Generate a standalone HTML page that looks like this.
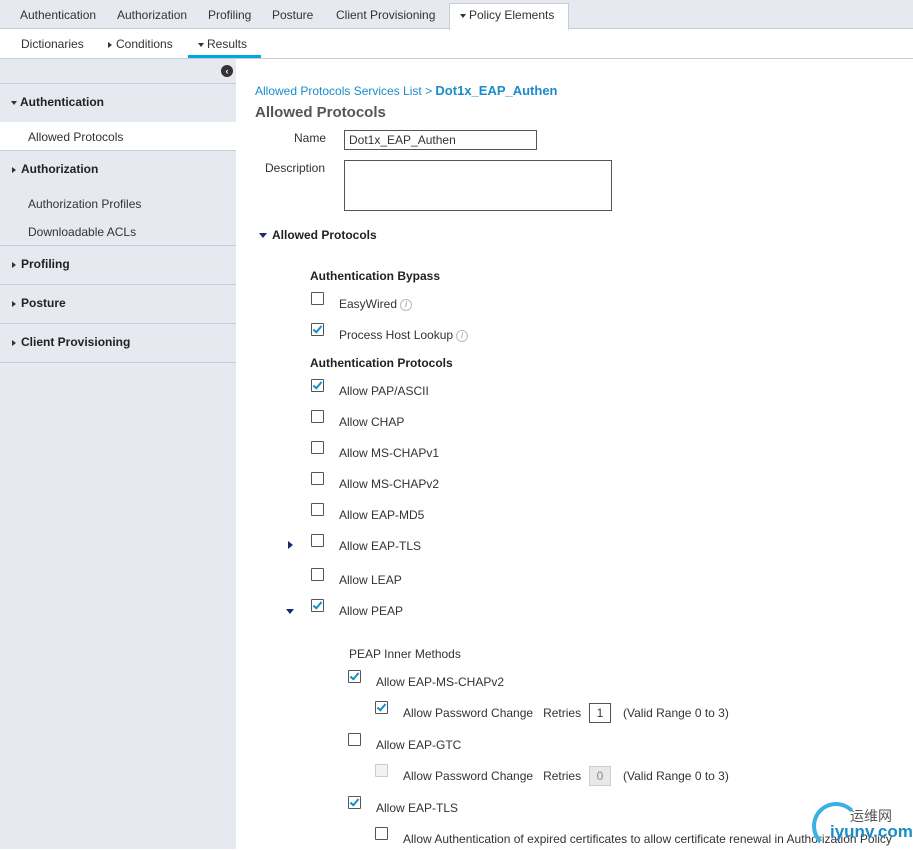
<!DOCTYPE html><html><head><style>
body{margin:0;width:913px;height:849px;overflow:hidden;font-family:"Liberation Sans",sans-serif;font-size:12px;color:#333;background:#fff;position:relative}
.a{position:absolute;white-space:nowrap}
.cb{position:absolute;width:11px;height:11px;border:1px solid #555;background:#fff;border-radius:1px}
.cb.c::after{content:"";position:absolute;left:3px;top:0px;width:3px;height:7px;border:solid #1a8cc8;border-width:0 2px 2px 0;transform:rotate(40deg)}
.b{font-weight:bold;color:#222}
.sl{position:absolute;left:0;width:236px;height:1px;background:#c8ccd4}
.tri{display:inline-block;width:0;height:0;border-left:3px solid transparent;border-right:3px solid transparent;border-top:4px solid #333;vertical-align:middle;margin-right:3px}
.trr{display:inline-block;width:0;height:0;border-top:3px solid transparent;border-bottom:3px solid transparent;border-left:4px solid #333;vertical-align:middle;margin-right:5px}
.i{display:inline-block;width:10px;height:10px;border:1px solid #bbb;border-radius:50%;font-size:8px;text-align:center;line-height:10px;color:#888;font-style:italic;margin-left:3px;vertical-align:middle}
</style></head><body>
<div class="a" style="left:0;top:0;width:913px;height:28px;background:#e6e9f0;border-bottom:1px solid #c8ccd4"></div>
<div class="a" style="left:449px;top:3px;width:118px;height:26px;background:#fff;border:1px solid #c8ccd4;border-bottom:none"></div>
<div class="a" style="left:20px;top:8px">Authentication</div>
<div class="a" style="left:117px;top:8px">Authorization</div>
<div class="a" style="left:208px;top:8px">Profiling</div>
<div class="a" style="left:272px;top:8px">Posture</div>
<div class="a" style="left:336px;top:8px">Client Provisioning</div>
<div class="a" style="left:460px;top:8px"><span class="tri"></span>Policy Elements</div>
<div class="a" style="left:21px;top:37px">Dictionaries</div>
<div class="a" style="left:108px;top:37px"><span class="trr" style="margin-right:4px"></span>Conditions</div>
<div class="a" style="left:198px;top:37px"><span class="tri"></span>Results</div>
<div class="a" style="left:188px;top:55px;width:73px;height:3px;background:#00a8e0"></div>
<div class="a" style="left:0;top:58px;width:913px;height:1px;background:#c8ccd4"></div>
<div class="a" style="left:0;top:59px;width:236px;height:790px;background:#e6e9f0"></div>
<div class="a" style="left:221px;top:65px;width:12px;height:12px;border-radius:50%;background:#333;color:#fff;font-size:9px;line-height:12px;text-align:center;font-weight:bold">‹</div>
<div class="sl" style="top:83px"></div>
<div class="a" style="left:0;top:122px;width:236px;height:28px;background:#fff"></div>
<div class="sl" style="top:150px"></div><div class="sl" style="top:245px"></div><div class="sl" style="top:284px"></div><div class="sl" style="top:323px"></div><div class="sl" style="top:362px"></div>
<div class="a b" style="left:11px;top:95px"><span class="tri"></span>Authentication</div>
<div class="a" style="left:28px;top:130px">Allowed Protocols</div>
<div class="a b" style="left:12px;top:162px"><span class="trr"></span>Authorization</div>
<div class="a" style="left:28px;top:197px">Authorization Profiles</div>
<div class="a" style="left:28px;top:225px">Downloadable ACLs</div>
<div class="a b" style="left:12px;top:257px"><span class="trr"></span>Profiling</div>
<div class="a b" style="left:12px;top:296px"><span class="trr"></span>Posture</div>
<div class="a b" style="left:12px;top:335px"><span class="trr"></span>Client Provisioning</div>
<div class="a" style="left:255px;top:83px;color:#1a8cc8">Allowed Protocols Services List &gt; <b style="font-size:13px">Dot1x_EAP_Authen</b></div>
<div class="a" style="left:255px;top:104px;font-size:15px;font-weight:bold;color:#555">Allowed Protocols</div>
<div class="a" style="left:294px;top:131px">Name</div>
<div class="a" style="left:344px;top:130px;width:190px;height:18px;border:1px solid #555;line-height:19px;padding-left:4px;box-sizing:content-box;width:187px">Dot1x_EAP_Authen</div>
<div class="a" style="left:265px;top:161px">Description</div>
<div class="a" style="left:344px;top:160px;width:266px;height:49px;border:1px solid #555"></div>
<div class="a b" style="left:259px;top:228px"><span class="tri" style="border-top-color:#1a2a6a;border-width:5px 4px 0 4px;margin-right:5px"></span>Allowed Protocols</div>
<div class="a b" style="left:310px;top:269px">Authentication Bypass</div>
<div class="cb" style="left:311px;top:292px"></div><div class="a" style="left:339px;top:297px">EasyWired<span class="i">i</span></div>
<div class="cb c" style="left:311px;top:323px"></div><div class="a" style="left:339px;top:328px">Process Host Lookup<span class="i">i</span></div>
<div class="a b" style="left:310px;top:356px">Authentication Protocols</div>
<div class="cb c" style="left:311px;top:379px"></div><div class="a" style="left:339px;top:384px">Allow PAP/ASCII</div>
<div class="cb" style="left:311px;top:410px"></div><div class="a" style="left:339px;top:415px">Allow CHAP</div>
<div class="cb" style="left:311px;top:441px"></div><div class="a" style="left:339px;top:446px">Allow MS-CHAPv1</div>
<div class="cb" style="left:311px;top:472px"></div><div class="a" style="left:339px;top:477px">Allow MS-CHAPv2</div>
<div class="cb" style="left:311px;top:503px"></div><div class="a" style="left:339px;top:508px">Allow EAP-MD5</div>
<div class="a" style="left:288px;top:541px;border-top:4px solid transparent;border-bottom:4px solid transparent;border-left:5px solid #1a2a6a"></div>
<div class="cb" style="left:311px;top:534px"></div><div class="a" style="left:339px;top:539px">Allow EAP-TLS</div>
<div class="cb" style="left:311px;top:568px"></div><div class="a" style="left:339px;top:573px">Allow LEAP</div>
<div class="a" style="left:286px;top:609px;border-left:4px solid transparent;border-right:4px solid transparent;border-top:5px solid #1a2a6a"></div>
<div class="cb c" style="left:311px;top:599px"></div><div class="a" style="left:339px;top:604px">Allow PEAP</div>
<div class="a" style="left:349px;top:647px">PEAP Inner Methods</div>
<div class="cb c" style="left:348px;top:670px"></div><div class="a" style="left:376px;top:675px">Allow EAP-MS-CHAPv2</div>
<div class="cb c" style="left:375px;top:701px"></div><div class="a" style="left:403px;top:706px">Allow Password Change&nbsp;&nbsp; Retries</div>
<div class="a" style="left:589px;top:703px;width:20px;height:18px;border:1px solid #555;line-height:19px;text-align:center">1</div>
<div class="a" style="left:623px;top:706px">(Valid Range 0 to 3)</div>
<div class="cb" style="left:348px;top:733px"></div><div class="a" style="left:376px;top:738px">Allow EAP-GTC</div>
<div class="cb" style="left:375px;top:764px;border-color:#ccc;background:#f2f2f2"></div><div class="a" style="left:403px;top:769px">Allow Password Change&nbsp;&nbsp; Retries</div>
<div class="a" style="left:589px;top:766px;width:20px;height:18px;border:1px solid #ccc;background:#e8e8e8;line-height:19px;text-align:center;color:#888">0</div>
<div class="a" style="left:623px;top:769px">(Valid Range 0 to 3)</div>
<div class="cb c" style="left:348px;top:796px"></div><div class="a" style="left:376px;top:801px">Allow EAP-TLS</div>
<div class="cb" style="left:375px;top:827px"></div><div class="a" style="left:403px;top:832px">Allow Authentication of expired certificates to allow certificate renewal in Authorization Policy</div>
<div class="a" style="left:812px;top:802px;width:40px;height:40px;border-radius:50%;border:4px solid #3ab0e6;border-right-color:transparent;border-bottom-color:transparent"></div>
<div class="a" style="left:850px;top:806px;font-size:14px;color:#555;font-family:'Noto Sans CJK SC',sans-serif">运维网</div>
<div class="a" style="left:830px;top:822px;font-size:17px;font-weight:bold;color:#1a8cc8">iyunv.com</div>
</body></html>
